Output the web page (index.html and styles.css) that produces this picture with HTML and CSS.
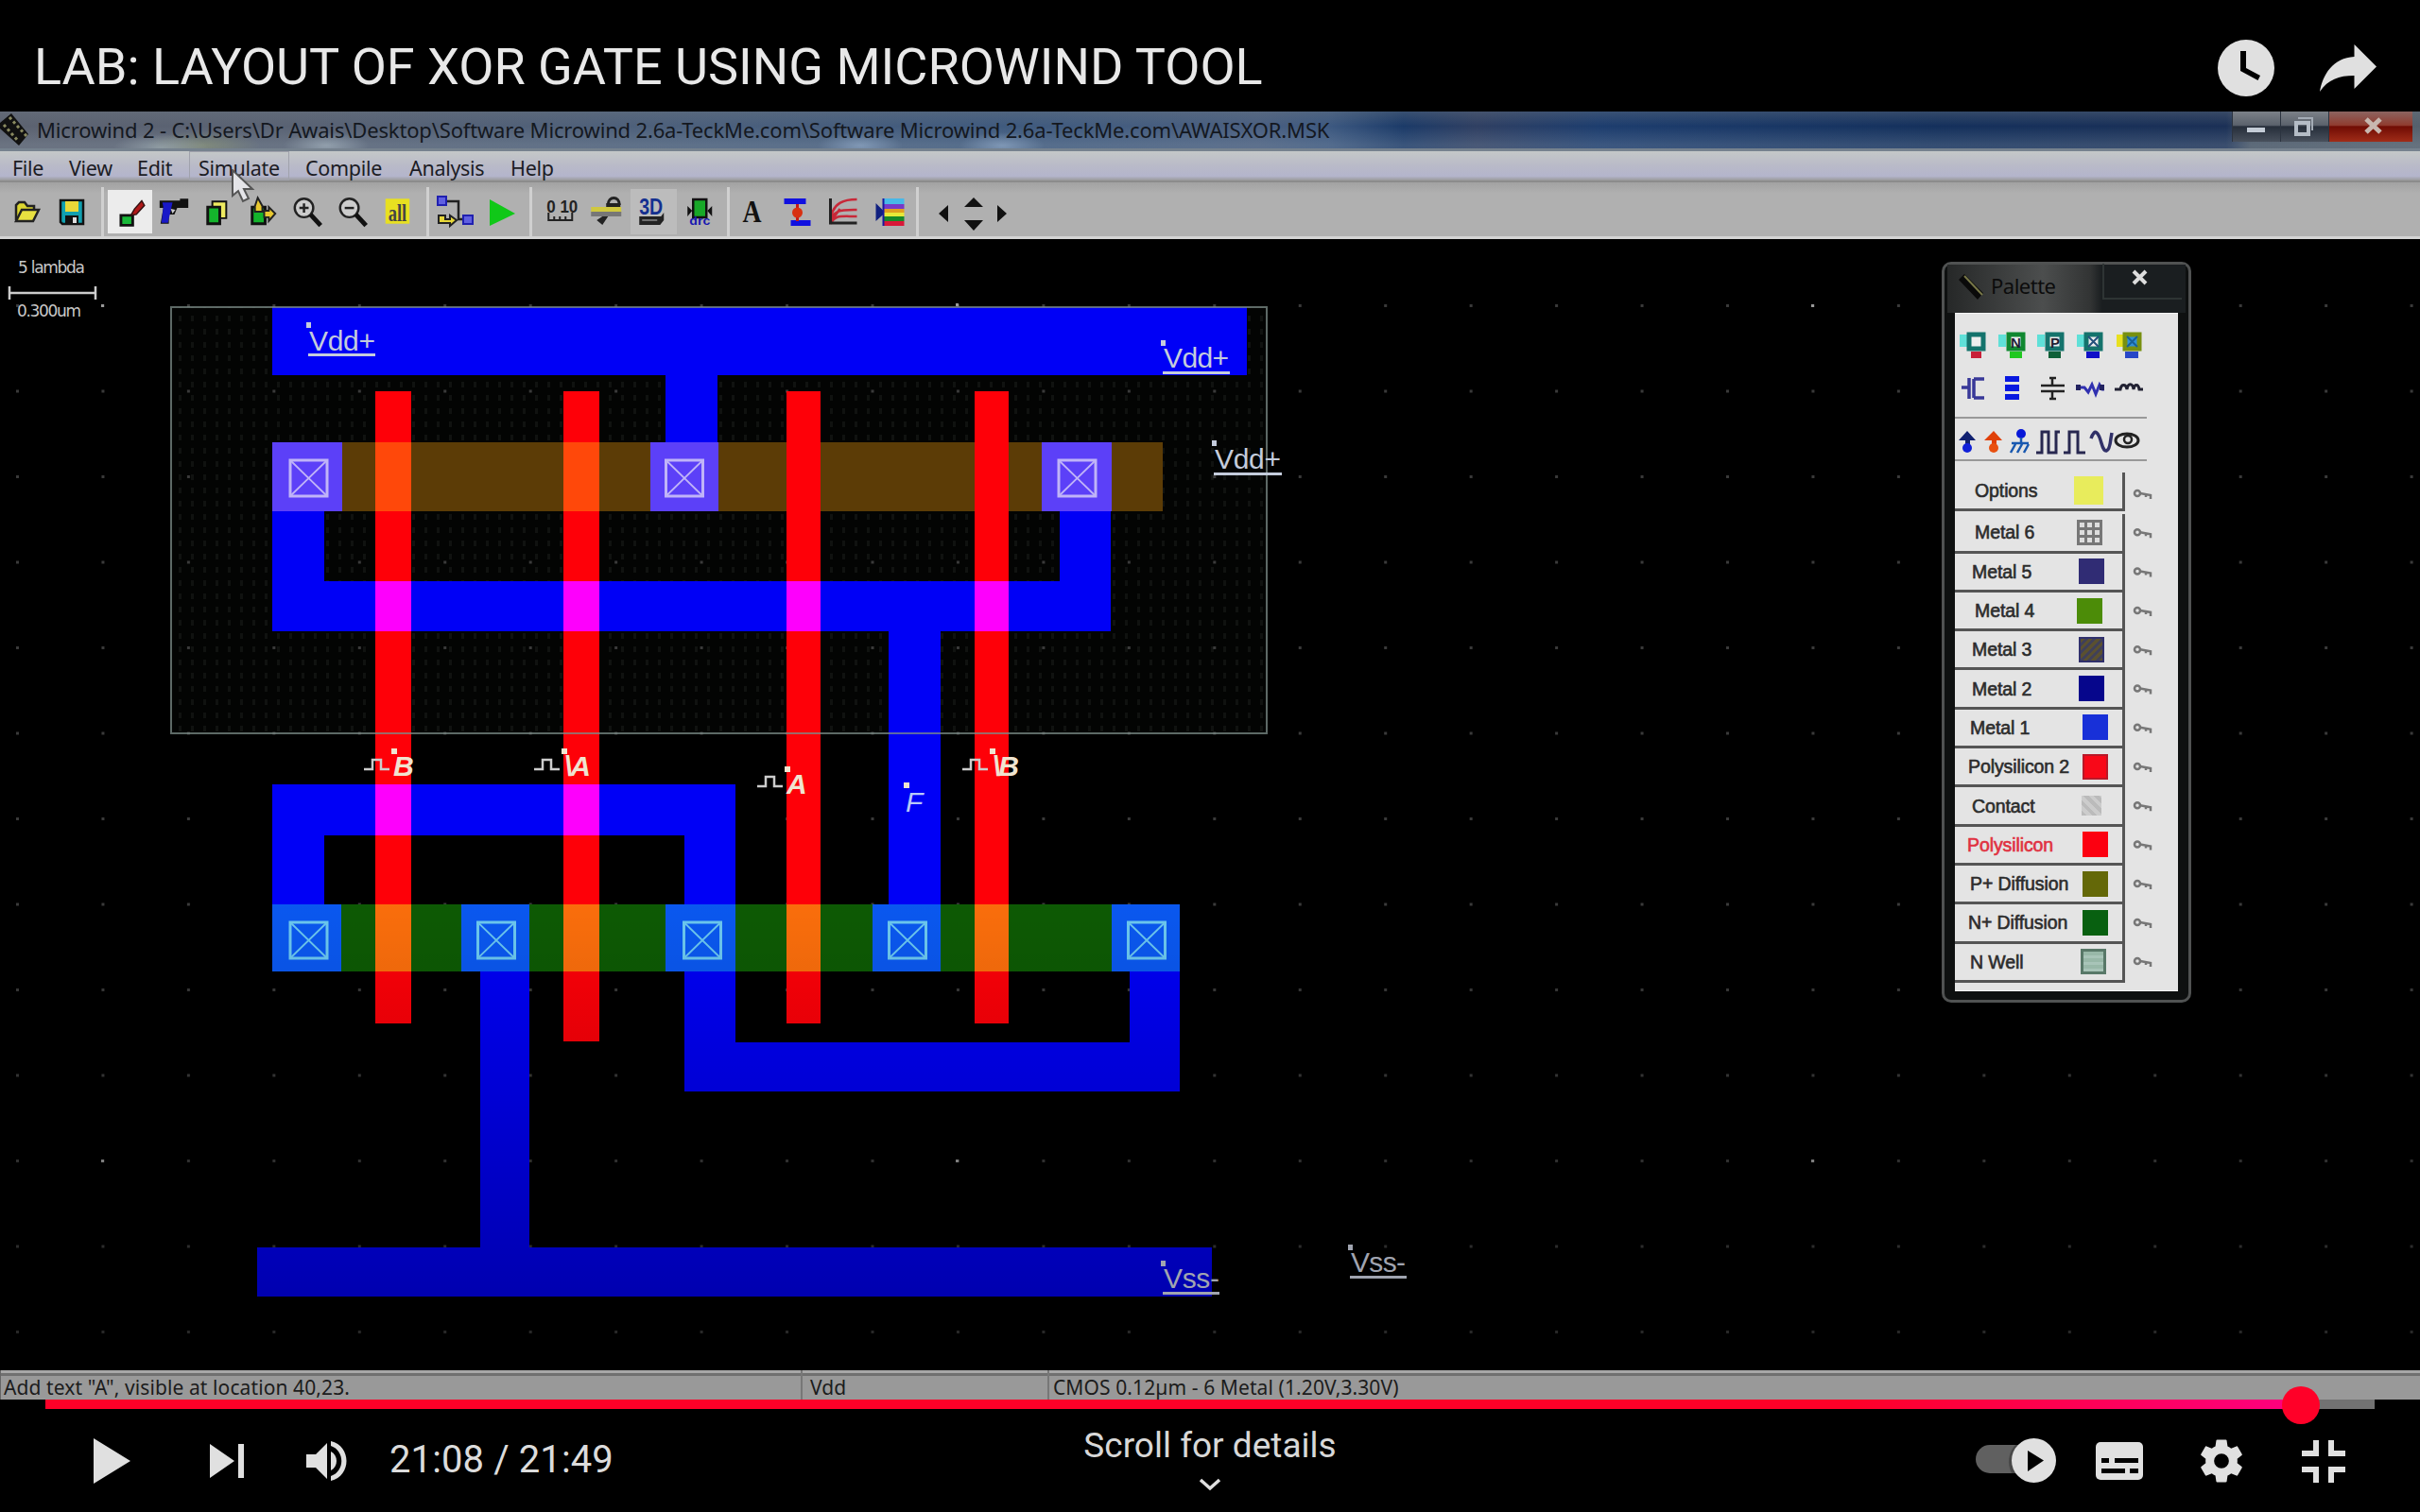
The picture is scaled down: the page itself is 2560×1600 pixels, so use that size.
FILE: index.html
```html
<!DOCTYPE html>
<html lang="en">
<head>
<meta charset="utf-8">
<title>LAB: LAYOUT OF XOR GATE USING MICROWIND TOOL</title>
<link rel="stylesheet" href="styles.css">
</head>
<body>
<div class="player">
  <header class="top">
    <h1 class="video-title">LAB: LAYOUT OF XOR GATE USING MICROWIND TOOL</h1>
    <svg class="ic" width="60" height="60" viewBox="0 0 60 60"><circle cx="30" cy="30" r="30"/><path d="M24 12h6v18l15 8-2.500 5L24 33z" fill="#000"/></svg>
    <svg class="ic share" width="60" height="50" viewBox="0 0 60 50"><path d="M36.500 0L60 23.500 36.500 47V33C20 33 9 37 0 50 3 32 14 14 36.500 13z"/></svg>
  </header>

  <div class="titlebar">
    <svg class="chip" width="32" height="40" viewBox="0 0 32 40"><path d="M0 12L12 2l18 22-10 12L0 18z" fill="#111"/><path d="M4 14l16 18M10 6l18 20" stroke="#8a8a60" stroke-width="3" stroke-dasharray="3 3"/></svg>
    <span class="wtitle">Microwind 2 - C:\Users\Dr Awais\Desktop\Software Microwind 2.6a-TeckMe.com\Software Microwind 2.6a-TeckMe.com\AWAISXOR.MSK</span>
    <div class="wbtns">
      <span class="wb min"><svg width="50" height="32" viewBox="0 0 50 32"><path d="M15 17h19v5H15z" fill="#c4ccd6"/></svg></span>
      <span class="wb max"><svg width="50" height="32" viewBox="0 0 50 32"><path d="M16 12h13v12H16z" fill="none" stroke="#b4bcc6" stroke-width="4"/><path d="M18 7h15v13" fill="none" stroke="#a4acb6" stroke-width="2"/></svg></span>
      <span class="wb close"><svg width="88" height="32" viewBox="0 0 88 32"><path d="M39 8l15 14M54 8L39 22" stroke="#c8b8b0" stroke-width="5"/></svg></span>
    </div>
  </div>

  <nav class="menubar">
    <span class="m mi1">File</span><span class="m mi2">View</span><span class="m mi3">Edit</span><span class="m mi4">Simulate</span><span class="m mi5">Compile</span><span class="m mi6">Analysis</span><span class="m mi7">Help</span>
  </nav>
  <svg class="cursor" width="26" height="36" viewBox="0 0 26 36"><path d="M1 1v27l6-5 5 11 6-3-5-10h9z" fill="#e4e4e8" stroke="#555" stroke-width="2"/></svg>

  <div class="toolbar">
    <div class="grp g1">
      <svg viewBox="0 0 48 48"><path d="M13 33V17l3-3h6l3 4h7v5" fill="#dcd630" stroke="#222" stroke-width="2.500"/><path d="M13 34l6-12h18l-6 12z" fill="#e8e040" stroke="#222" stroke-width="2.500"/></svg>
      <svg viewBox="0 0 48 48"><path d="M12 12h24v25H14l-2-2z" fill="#10a0b0" stroke="#111" stroke-width="2.500"/><path d="M17 13h14v11H17z" fill="#e8d838"/><path d="M17 28h14v9H17z" fill="#111"/><path d="M25 30h4v6h-4z" fill="#ddd"/></svg>
    </div>
    <div class="grp g2">
      <svg class="on" viewBox="0 0 48 48"><path d="M14 28h13v11H14z" fill="#18b838" stroke="#111" stroke-width="3"/><path d="M25 28l4-7L37 12l3 5-9 10z" fill="#b01818" stroke="#311" stroke-width="1.500"/></svg>
      <svg viewBox="0 0 48 48"><path d="M8 12h22v-2h9v10H27l-3 7h-6v10H9l3-17H8z" fill="#111"/><path d="M11 14h11l-5 22h-7l2-17z" fill="#1818c8"/><path d="M20 21l5 1-3 4z" fill="#ccc"/></svg>
      <svg viewBox="0 0 48 48"><path d="M17 13h15v18H17z" fill="#eeea60" stroke="#111" stroke-width="2"/><path d="M12 19h13v18H12z" fill="#14b42c" stroke="#111" stroke-width="3"/></svg>
      <svg viewBox="0 0 48 48"><path d="M12 19h14v18H12z" fill="#14b42c" stroke="#111" stroke-width="3"/><path d="M18 9l5 9v6h-8v-6zM25 23h5v-4l7 7-7 8v-4h-5z" fill="#e8c830" stroke="#222" stroke-width="2"/></svg>
      <svg viewBox="0 0 48 48"><circle cx="20" cy="20" r="10" fill="#ccc" stroke="#222" stroke-width="2.500"/><path d="M15 20h10M20 15v10" stroke="#222" stroke-width="2.500"/><path d="M27 27l11 12" stroke="#111" stroke-width="5"/></svg>
      <svg viewBox="0 0 48 48"><circle cx="21" cy="20" r="10" fill="#ccc" stroke="#222" stroke-width="2.500"/><path d="M16 20h10" stroke="#222" stroke-width="2.500"/><path d="M28 27l11 12" stroke="#111" stroke-width="5"/></svg>
      <svg viewBox="0 0 48 48"><path d="M12 10h26v27H12z" fill="#e8e020"/><text x="15" y="34" class="all" textLength="20" lengthAdjust="spacingAndGlyphs">all</text></svg>
    </div>
    <div class="grp g3">
      <svg viewBox="0 0 48 48"><path d="M14 13h13v19h13" fill="none" stroke="#222" stroke-width="2.500"/><path d="M5 8h9v9H5zM32 28h10v9H32z" fill="#6060e0" stroke="#2020b0" stroke-width="2"/><path d="M6 28h7v4h5v-4l7 5-7 6v-3H6z" fill="#e8d838" stroke="#222" stroke-width="2"/></svg>
      <svg viewBox="0 0 48 48"><path d="M12 11l27 15-27 13z" fill="#10c818"/></svg>
    </div>
    <div class="grp g4">
      <svg viewBox="0 0 48 48"><text x="8" y="25" class="num" textLength="33" lengthAdjust="spacingAndGlyphs">0 10</text><path d="M10 25v8h25v-8M16 29v4M22 29v4M28 29v4" fill="none" stroke="#222" stroke-width="2"/></svg>
      <svg viewBox="0 0 48 48"><path d="M24 17c0-10 12-10 12 0" fill="none" stroke="#222" stroke-width="3"/><path d="M22 15h15v5H22z" fill="#222"/><path d="M6 19h32v6H6z" fill="#d0c840"/><path d="M6 24h32v5H6z" fill="#777"/><path d="M24 29l-6 9-6-5 6-4z" fill="#222"/></svg>
      <svg class="lit" viewBox="0 0 48 48"><text x="9" y="27" class="d3" textLength="25" lengthAdjust="spacingAndGlyphs">3D</text><path d="M9 29h23l3-4v8l-4 5H9z" fill="#222"/><path d="M12 33h16" stroke="#888" stroke-width="1.500"/></svg>
      <svg viewBox="0 0 48 48"><path d="M17 11h14v19H17z" fill="#18a828" stroke="#111" stroke-width="2.500"/><path d="M11 18l5 5-5 6zM37 18l-5 5 5 6z" fill="#111"/><text x="13" y="38" class="drc" textLength="22" lengthAdjust="spacingAndGlyphs">drc</text></svg>
    </div>
    <div class="grp g5">
      <svg viewBox="0 0 48 48"><text x="13" y="35" class="bigA" textLength="20" lengthAdjust="spacingAndGlyphs">A</text></svg>
      <svg viewBox="0 0 48 48"><path d="M8 10h23v6H8zM15 33h21v6H15z" fill="#1010e0"/><path d="M22 16v18" stroke="#c81818" stroke-width="3"/><circle cx="22" cy="25" r="5.500" fill="#d83010"/></svg>
      <svg viewBox="0 0 48 48"><path d="M8 37c5-10 10-8 28-8M8 37c2-16 12-15 28-15M8 37c0-25 18-26 28-26M8 35l10-14" fill="none" stroke="#c82838" stroke-width="2.500"/><path d="M8 10v26h28" fill="none" stroke="#222" stroke-width="3"/></svg>
      <svg viewBox="0 0 48 48"><path d="M7 15l10 10-10 9z" fill="#102080"/><path d="M15 10h22v6H15z" fill="#48b8e8"/><path d="M15 16h22v5H15z" fill="#7838c8"/><path d="M15 21h22v4H15z" fill="#e0a020"/><path d="M15 25h22v4H15z" fill="#e8e838"/><path d="M15 29h22v5H15z" fill="#188828"/><path d="M15 34h22v5H15z" fill="#d81838"/><path d="M15 10v29" stroke="#1818a0" stroke-width="2"/></svg>
    </div>
    <svg class="nav" width="92" height="48" viewBox="0 0 92 48"><path d="M9 26l10-9v18zM81 26l-10-9v18zM36 19l10-10 10 10zM36 33l10 11 10-11z" fill="#111"/></svg>
  </div>

  <main class="canvas">
    <svg class="chipart" width="2560" height="1197" viewBox="0 253 2560 1197">
      <defs>
        <pattern id="grid" x="17" y="322" width="90.450" height="90.500" patternUnits="userSpaceOnUse"><rect width="3" height="3" fill="#3a3a3a"/></pattern>
        <pattern id="well" x="184" y="330" width="13" height="14" patternUnits="userSpaceOnUse"><rect width="13" height="14" fill="#030403"/><rect x="5" y="4" width="3" height="6" fill="#101210"/></pattern>
        <linearGradient id="shade" x1="0" y1="0" x2="0" y2="1"><stop offset="0" stop-opacity="0"/><stop offset=".4" stop-opacity=".13"/><stop offset="1" stop-opacity=".34"/></linearGradient>
        <g id="ct" fill="none"><path d="M0 0h39v38H0z" stroke-width="3"/><path d="M0 0l39 38M39 0L0 38" stroke-width="1.800"/></g>
        <path id="pulse" d="M0 0h9v-10h9v10h9" fill="none" stroke="#ccc" stroke-width="2.500"/>
      </defs>
      <rect x="181" y="325" width="1158" height="451" fill="url(#well)"/>
      <rect x="0" y="300" width="2560" height="1140" fill="url(#grid)"/>
      <g fill="#999"><path d="M107 322h3v3h-3zM1011 321h3v3h-3zM1916 322h3v3h-3zM107 1227h3v3h-3zM1011 1227h3v3h-3zM1916 1227h3v3h-3z"/></g>
      <g fill="#0000f6">
        <path d="M288 325h1031v72H759v71h-55v-71H288z"/>
        <path d="M288 541h55v74h778v-74h54v127H995v289h-55V668H288z"/>
        <path d="M288 957V830h490v127h-54v-73H343v73z"/>
        <path d="M508 1028h52v292h722v52H272v-52h236z"/>
        <path d="M724 1028h54v75h417v-75h53v127H724z"/>
      </g>
      <path d="M288 468h942v73H288z" fill="#5c3c06"/>
      <path d="M288 957h960v71H288z" fill="#0d5a04"/>
      <path d="M288 468h74v73h-74zM688 468h72v73h-72zM1102 468h74v73h-74z" fill="#5c40f8"/>
      <path d="M288 957h73v71h-73zM488 957h72v71h-72zM704 957h74v71h-74zM923 957h72v71h-72zM1176 957h72v71h-72z" fill="#0a58f0"/>
      <path d="M397 414h38v669h-38zM596 414h38v688h-38zM832 414h36v669h-36zM1031 414h36v669h-36z" fill="#fe0008"/>
      <path d="M397 615h38v53h-38zM596 615h38v53h-38zM832 615h36v53h-36zM1031 615h36v53h-36zM397 830h38v54h-38zM596 830h38v54h-38z" fill="#fd00fc"/>
      <path d="M397 468h38v73h-38zM596 468h38v73h-38z" fill="#ff480a"/>
      <path d="M397 957h38v71h-38zM596 957h38v71h-38zM832 957h36v71h-36zM1031 957h36v71h-36z" fill="#fb6e0c"/>
      <g stroke="#c0b4f8"><use href="#ct" x="307" y="487"/><use href="#ct" x="704.500" y="487"/><use href="#ct" x="1120" y="487"/></g>
      <g stroke="#6cc8f0"><use href="#ct" x="307" y="976"/><use href="#ct" x="505.500" y="976"/><use href="#ct" x="723.500" y="976"/><use href="#ct" x="940.500" y="976"/><use href="#ct" x="1193.500" y="976"/></g>
      <path d="M181 325h1159v451H181z" fill="none" stroke="#7c8c88" stroke-opacity=".75" stroke-width="2"/>
      <rect x="0" y="950" width="2560" height="500" fill="url(#shade)"/>

      <g class="net">
        <text x="327" y="371" textLength="70">Vdd+</text><text x="1231" y="389" textLength="69">Vdd+</text><text x="1285" y="496" textLength="70">Vdd+</text>
        <path d="M326 374h71v3h-71zM1230 393h71v3h-71zM1284 500h72v3h-72z"/>
        <path d="M324 341h5v6h-5zM1228 360h5v6h-5zM1282 466h5v6h-5z"/>
      </g>
      <g class="net vss">
        <text x="1231" y="1363" textLength="59">Vss-</text><text x="1429" y="1346" textLength="58">Vss-</text>
        <path d="M1230 1367h60v3h-60zM1428 1350h60v3h-60zM1228 1334h5v6h-5zM1426 1317h5v6h-5z"/>
      </g>
      <use href="#pulse" x="385" y="814"/><use href="#pulse" x="565" y="814"/><use href="#pulse" x="801" y="832"/><use href="#pulse" x="1018" y="814"/>
      <g class="sig">
        <text x="416" y="821">B</text><text x="597" y="821" textLength="28">\A</text><text x="832" y="840">A</text><text x="1050" y="821" textLength="28">\B</text><text x="958" y="859" class="thin">F</text>
        <path d="M414 792h6v6h-6zM594 792h6v6h-6zM830 811h6v6h-6zM956 828h6v6h-6zM1047 792h6v6h-6z"/>
      </g>
      <g class="scale">
        <text x="19" y="289" textLength="71">5 lambda</text><text x="18" y="335" textLength="68">0.300um</text>
        <path d="M10 303v14M101 303v14M10 310h91" stroke="#ccc" stroke-width="2.500"/>
      </g>
    </svg>

    <aside class="palette">
      <div class="phead">
        <svg width="30" height="32" viewBox="0 0 30 32"><path d="M2 8l6-6 20 20-6 7z" fill="#0a0a0a"/><path d="M8 4l19 20" stroke="#777748" stroke-width="2"/></svg>
        <span class="pname">Palette</span>
        <span class="px"><svg width="18" height="18" viewBox="0 0 18 18"><path d="M2 2l13 13M15 2L2 15" stroke="#ddd" stroke-width="4"/></svg></span>
      </div>
      <div class="pbody">
        <svg width="236" height="165" viewBox="2069 331 236 165">
          <g stroke-width="5" fill="#eee">
            <path d="M2074 353h8v13h-8zM2115 353h8v13h-8zM2156 353h8v13h-8zM2198 353h8v13h-8z" fill="#60e0d8"/><path d="M2240 353h8v13h-8z" fill="#e8e020"/>
            <path d="M2084 353h15v15h-15zM2167 353h15v15h-15zM2208 353h15v15h-15z" stroke="#14736c"/><path d="M2126 353h15v15h-15z" stroke="#108830"/><path d="M2249 353h15v15h-15z" stroke="#789010" fill="#3090d8"/>
          </g>
          <path d="M2086 371h11v7h-11z" fill="#c82038"/><path d="M2127 371h13v7h-13z" fill="#20c820"/><path d="M2168 371h13v7h-13z" fill="#106038"/><path d="M2208 371h14v7h-14z" fill="#1010c8"/><path d="M2249 371h14v7h-14z" fill="#2848c8"/>
          <text x="2128" y="367" class="pl">N</text><text x="2170" y="367" class="pl">P</text>
          <path d="M2210 355l11 11M2221 355l-11 11" stroke="#24507c" stroke-width="2"/><path d="M2251 355l11 11M2262 355l-11 11" stroke="#186098" stroke-width="2"/>
          <path d="M2084 399v22M2076 409h8M2089 400v20M2100 400h-11M2100 420h-11" stroke="#383898" stroke-width="3.500" fill="none"/>
          <path d="M2122 397h15v6h-15zM2122 406h15v7h-15zM2122 416h15v6h-15z" fill="#0818e0"/>
          <path d="M2160 407h25M2160 413h25M2172 398v9M2172 413v9M2169 399h7M2169 421h7" stroke="#222" stroke-width="2.500"/>
          <path d="M2197 409h9l4 5 4-8 4 10 4-10 3 5h2" stroke="#3030b0" stroke-width="3" fill="none"/><path d="M2197 406h5v6h-5zM2222 406h5v6h-5z" fill="#222260"/>
          <path d="M2238 411h6c1-6 6-6 7 0 1-7 6-7 7 0 1-6 5-6 6 0h4" stroke="#223" stroke-width="3" fill="none"/>
          <path d="M2068 441h204M2068 486h204" stroke="#999" stroke-width="2"/>
          <path d="M2082 455l9 10h-6v8h-5v-8h-7z" fill="#102070"/><circle cx="2082" cy="473" r="5" fill="#1020d8"/>
          <path d="M2110 455l9 10h-6v8h-5v-8h-8z" fill="#e04008"/><circle cx="2110" cy="473" r="5" fill="#e85010"/>
          <circle cx="2139" cy="458" r="5" fill="#0818d8"/><path d="M2139 462v6M2129 468h18M2133 469l-5 9M2140 469l-5 9M2147 469l-5 9" stroke="#1858b0" stroke-width="2.500"/>
          <path d="M2155 478h6v-22h7v22h8v-22h4M2184 478h6v-22h9v22h8" stroke="#282850" stroke-width="3" fill="none"/>
          <path d="M2213 463c4-12 8-6 11 5s8 12 10-5l1-6" stroke="#303068" stroke-width="3.500" fill="none"/>
          <ellipse cx="2251" cy="465" rx="12" ry="7" fill="none" stroke="#222" stroke-width="3"/><circle cx="2252" cy="464" r="4" fill="none" stroke="#222" stroke-width="2.500"/>
        </svg>
        <div class="layers">
          <div class="row first"><b class="nm i22">Options</b><i class="sw yellow"></i></div>
          <div class="row"><b class="nm i22">Metal 6</b><i class="sw mesh"></i></div>
          <div class="row"><b class="nm i18">Metal 5</b><i class="sw metal5"></i></div>
          <div class="row"><b class="nm i22">Metal 4</b><i class="sw metal4"></i></div>
          <div class="row"><b class="nm i18">Metal 3</b><i class="sw metal3"></i></div>
          <div class="row"><b class="nm i18">Metal 2</b><i class="sw metal2"></i></div>
          <div class="row"><b class="nm i16">Metal 1</b><i class="sw metal1"></i></div>
          <div class="row"><b class="nm i15">Polysilicon 2</b><i class="sw p2"></i></div>
          <div class="row"><b class="nm i18">Contact</b><i class="sw con"></i></div>
          <div class="row"><b class="nm i14 red">Polysilicon</b><i class="sw p1"></i></div>
          <div class="row"><b class="nm i16">P+ Diffusion</b><i class="sw pd"></i></div>
          <div class="row"><b class="nm i15">N+ Diffusion</b><i class="sw nd"></i></div>
          <div class="row"><b class="nm i16">N Well</b><i class="sw nw"></i></div>
        </div>
        <svg class="keys" width="24" height="545" viewBox="0 0 24 545">
          <defs><g id="key" fill="none" stroke="#777" stroke-width="2.500"><circle cx="5" cy="4" r="3"/><path d="M8 4l11 2v4M14 5v3"/></g></defs>
          <use href="#key" y="18"/><use href="#key" y="59.300"/><use href="#key" y="100.600"/><use href="#key" y="141.900"/><use href="#key" y="183.200"/><use href="#key" y="224.500"/><use href="#key" y="265.800"/><use href="#key" y="307"/><use href="#key" y="348.300"/><use href="#key" y="389.600"/><use href="#key" y="431"/><use href="#key" y="472"/><use href="#key" y="513"/>
        </svg>
      </div>
    </aside>
  </main>

  <div class="status"><span class="s1">Add text "A", visible at location 40,23.</span><span class="s2">Vdd</span><span class="s3">CMOS 0.12µm - 6 Metal (1.20V,3.30V)</span></div>

  <div class="bar"><div class="played"></div><div class="knob"></div></div>
  <footer class="controls">
    <div class="left">
      <svg class="ic" width="39" height="48" viewBox="0 0 39 48"><path d="M0 0l39 24L0 48z"/></svg>
      <svg class="ic nxt" width="36" height="36" viewBox="0 0 36 36"><path d="M0 0l26 18L0 36zM30 0h6v36h-6z"/></svg>
      <svg class="ic vol" width="43" height="42" viewBox="0 0 43 42"><path d="M0 14h10L22 2v38L10 28H0zM26 11c8 4 8 16 0 20z"/><path d="M26 0c22 5 22 37 0 42v-5c15-5 15-27 0-32z"/></svg>
      <span class="time">21:08 / 21:49</span>
    </div>
    <div class="mid"><span>Scroll for details</span><svg width="24" height="14" viewBox="0 0 24 14"><path d="M2 2l10 9 10-9" fill="none" stroke="#e0e0e0" stroke-width="3.500"/></svg></div>
    <div class="right">
      <svg width="86" height="48" viewBox="0 0 86 48"><rect x="0" y="7" width="66" height="30" rx="15" fill="#606060"/><path d="M42 7a26 26 0 0 0-4 30h10V7z" fill="#484848"/><circle cx="61.500" cy="23.500" r="23.500" fill="#e0e0e0"/><path d="M55 13l17 10.500L55 35z"/></svg>
      <svg class="cc" width="50" height="40" viewBox="0 0 50 40"><rect width="50" height="40" rx="5" fill="#e0e0e0"/><path d="M6 17h8v5H6zM20 17h25v5H20zM6 28h25v5H6zM36 28h9v5h-9z"/></svg>
      <svg class="ic gear" width="44" height="46" viewBox="2.200 2 19.600 20"><path d="M19.430 12.980c.04-.32.07-.64.07-.98s-.03-.66-.07-.98l2.110-1.650c.19-.15.24-.42.12-.64l-2-3.460c-.12-.22-.39-.3-.61-.22l-2.490 1c-.52-.4-1.080-.73-1.690-.98l-.38-2.650A.49.49 0 0 0 14 2h-4c-.25 0-.46.18-.49.42l-.38 2.650c-.61.25-1.170.59-1.690.98l-2.490-1c-.23-.09-.49 0-.61.22l-2 3.460c-.13.22-.07.49.12.64l2.110 1.650c-.04.32-.07.65-.07.98s.03.66.07.98l-2.110 1.650c-.19.15-.24.42-.12.64l2 3.460c.12.22.39.3.61.22l2.490-1c.52.4 1.080.73 1.690.98l.38 2.650c.03.24.24.42.49.42h4c.25 0 .46-.18.49-.42l.38-2.650c.61-.25 1.170-.59 1.690-.98l2.490 1c.23.09.49 0 .61-.22l2-3.460c.12-.22.07-.49-.12-.64zM12 15.500A3.500 3.500 0 1 1 12 8.500a3.500 3.500 0 0 1 0 7z"/></svg>
      <svg class="ic exit" width="46" height="45" viewBox="0 0 46 45"><path d="M12 0h6v17H0v-6h12zM28 0h6v11h12v6H28zM0 28h18v17h-6V34H0zM28 28h18v6H34v11h-6z"/></svg>
    </div>
  </footer>
</div>
</body>
</html>
```

FILE: styles.css
```css
* { box-sizing: border-box; }
body { margin: 0; background: #000; }
svg { display: block; flex: none; }
.player { position: relative; width: 2560px; height: 1600px; background: #000; overflow: hidden; display: flex; flex-direction: column; }
.ic { fill: #e0e0e0; }

.top { height: 118px; flex: none; display: flex; align-items: flex-start; padding: 42px 46px 0 36px; }
.video-title { margin: -3px auto 0 0; font: 400 54px/64px Roboto, sans-serif; color: #e8e8e8; white-space: nowrap; }
.share { margin: 5px 0 0 48px; }

.titlebar { height: 42px; flex: none; display: flex; align-items: flex-start; border-bottom: 3px solid #76828e;
  background: radial-gradient(ellipse 50px 14px at 170px 38px, rgba(170,185,190,.55), transparent),
    radial-gradient(ellipse 60px 16px at 215px 36px, rgba(170,180,110,.35), transparent),
    radial-gradient(ellipse 45px 14px at 345px 36px, rgba(180,195,205,.55), transparent),
    radial-gradient(ellipse 45px 14px at 910px 36px, rgba(160,185,215,.55), transparent),
    radial-gradient(ellipse 45px 14px at 1060px 36px, rgba(160,185,215,.55), transparent),
    linear-gradient(rgba(110,120,130,.35), transparent 40%, rgba(150,165,180,.25) 90%),
    linear-gradient(90deg, #5c6270 0, #596273 12%, #4a5f7c 30%, #3f5a7e 42%, #4a5f80 52%, #3c5880 55%, #1b3a68 58%, #2f3f62 61%, #1d3d6e 66%, #14305c 80%, #1b3056 92%, #4a5766 93%, #55606c 100%); }
.wtitle { margin-left: 7px; font: 400 22px/39px "Noto Sans", sans-serif; letter-spacing: -.16px; color: #14181f; white-space: nowrap; }
.wbtns { margin-left: auto; margin-right: 8px; display: flex; }
.wb { height: 32px; border-left: 1px solid #2c3440; background: linear-gradient(#7c8188, #5b626c 45%, #262e3a 50%, #48505c); }
.wb.close { background: linear-gradient(#8c6460, #903c30 45%, #700c04 50%, #a02c18); }

.menubar { height: 33px; flex: none; display: flex; background: linear-gradient(#c4c8c8, #b9bac8 50%, #b4b5cc 85%, #999); border-bottom: 2px solid #8c8c8c; }
.m { font: 400 21.500px/35px "Noto Sans", sans-serif; color: #1c1c24; letter-spacing: -.3px; }
.mi1 { width: 73px; padding-left: 13px; }
.mi2 { width: 72px; }
.mi3 { width: 55px; }
.mi4 { width: 106px; padding-left: 9px; border: 1px solid #a0a2ac; line-height: 33px; }
.mi5 { width: 127px; padding-left: 17px; }
.mi6 { width: 107px; }
.cursor { position: absolute; left: 245px; top: 179px; }

.toolbar { height: 60px; flex: none; display: flex; align-items: center; background: linear-gradient(#a2a2a2, #b0b0b0 20%, #b0b0b0); border-bottom: 3px solid #d4d4d4; padding: 4px 0 0 4px; }
.grp { display: flex; align-items: center; height: 52px; border-right: 3px solid #d0d0d0; }
.grp svg { height: 48px; }
.g1 { width: 106px; }
.g1 svg { width: 48px; }
.g2 { width: 344px; padding-left: 4px; }
.g2 svg { width: 47px; }
.grp .on { background: #ececec; height: 46px; }
.g3 { width: 109px; padding-left: 4px; }
.g3 svg { width: 48px; }
.g4 { width: 209px; padding-left: 7px; }
.g4 svg { width: 48.500px; }
.lit { background: #bcbcbc; }
.g5 { width: 200px; }
.g5 svg { width: 49px; }
.nav { margin-left: 12px; }
.all { font: 700 26px "Liberation Serif", serif; fill: #444; }
.num { font: 700 18px "Liberation Sans", sans-serif; fill: #222; }
.d3 { font: 700 24px "Liberation Sans", sans-serif; fill: #143090; }
.drc { font: 700 13px "Liberation Sans", sans-serif; fill: #1818b0; }
.bigA { font: 700 33px "Liberation Serif", serif; fill: #111; }
.pl { font: 700 15px "Liberation Sans", sans-serif; fill: #223; }

.canvas { position: relative; height: 1197px; flex: none; }
.net { font: 400 30px "Liberation Sans", sans-serif; fill: #c4ccdc; }
.vss { fill: #a0a4b0; }
.sig { font: italic 700 30px "Liberation Sans", sans-serif; fill: #f0e4d0; }
.thin { font-weight: 400; fill: #b8c8f8; }
.scale { font: 400 17px "DejaVu Sans", sans-serif; fill: #c8c8c8; }

.palette { position: absolute; left: 2054px; top: 24px; width: 264px; height: 784px; border: 3px solid #505252; border-radius: 10px; background: #0e1010; padding: 0 11px; }
.phead { height: 51px; display: flex; align-items: flex-start; background: linear-gradient(90deg, #262828, #4c4e4e 40%, #323434 60%, #1a1e20 65%, #1a1e20); margin: 0 -8px; padding: 8px 0 0 10px; }
.pname { margin-left: 6px; font: 400 22px/28px "Noto Sans", sans-serif; color: #0c0c0c; letter-spacing: -.5px; }
.px { margin: -9px 4px 0 auto; width: 84px; height: 38px; padding: 6px 0 0 29px; border: solid #2e3434; border-width: 0 0 2px 2px; }
.pbody { height: 718px; background: #e4e4e4; border: solid #f4f4f4; border-width: 1px 0 1px; display: grid; grid-template: 168px 1fr / 180px 1fr; }
.pbody > svg:first-child { grid-column: 1 / 3; }
.row { height: 41.300px; border-right: 3px solid #555; border-bottom: 3px solid #555; display: flex; align-items: center; }
.row.first { margin-bottom: 3px; }
.nm { font: 400 19.500px/24px "Liberation Sans", sans-serif; color: #2c2c2c; -webkit-text-stroke: .6px; letter-spacing: -.1px; white-space: nowrap; }
.i22 { padding-left: 21px; } .i18 { padding-left: 18px; } .i16 { padding-left: 16px; } .i15 { padding-left: 14px; } .i14 { padding-left: 13px; }
.red { color: #e03040; }
.sw { width: 27px; height: 27px; margin: 0 16px 0 auto; flex: none; }
.yellow { background: #e8ec5c; width: 31px; height: 30px; margin-right: 20px; }
.mesh { background: repeating-linear-gradient(#777 0 3px, transparent 3px 8px), repeating-linear-gradient(90deg, #777 0 3px, #ddd 3px 8px); margin-right: 21px; }
.metal5 { background: #302c74; margin-right: 19px; }
.metal4 { background: #4c8c08; margin-right: 21px; }
.metal3 { background: repeating-linear-gradient(135deg, #5a5030 0 3px, #404058 3px 6px); border: 2px solid #30306c; margin-right: 19px; }
.metal2 { background: #06068c; margin-right: 19px; }
.metal1 { background: #1830d8; margin-right: 15px; }
.p2 { background: #f80818; border: 2px solid #b81828; margin-right: 15px; }
.con { background: repeating-linear-gradient(45deg, #bbb 0 4px, #ccc 4px 8px); width: 21px; height: 21px; margin-right: 22px; }
.p1 { background: #fc0010; margin-right: 15px; }
.pd { background: #646808; margin-right: 15px; }
.nd { background: #086010; margin-right: 15px; }
.nw { background: repeating-linear-gradient(#98b8a8 0 4px, #a8c4b8 4px 7px); border: 3px solid #587868; margin-right: 17px; }
.keys { margin-left: 8px; }

.status { height: 31px; flex: none; display: flex; background: linear-gradient(#a8a8a8 0 3px, #707070 3px 6px, #999 6px); font: 400 21px/37px "Noto Sans", sans-serif; color: #1c1c1c; letter-spacing: .1px; white-space: nowrap; }
.s1 { width: 847px; padding-left: 3px; border-left: 1px solid #666; }
.s2 { width: 261px; padding-left: 8px; border-left: 2px solid #777; }
.s3 { padding-left: 4px; border-left: 2px solid #777; }

.bar { position: relative; height: 10px; flex: none; margin: 0 48px; background: #727272; }
.played { width: 2386px; height: 10px; background: linear-gradient(90deg, #ff0028 80%, #ff0080); }
.knob { position: absolute; left: 2366px; top: -14px; width: 40px; height: 40px; border-radius: 50%; background: #ff0028; }
.controls { flex: 1; display: grid; grid-template-columns: 1fr 300px 1fr; }
.left { display: flex; align-items: center; height: 110px; padding-left: 99px; }
.nxt { margin-left: 84px; }
.vol { margin-left: 66px; }
.time { margin: -2px 0 0 45px; font: 400 40px/48px Roboto, sans-serif; letter-spacing: .1px; color: #dcdcdc; }
.mid { display: flex; flex-direction: column; align-items: center; font: 400 37px/44px Roboto, sans-serif; color: #d8d8d8; padding-top: 17px; }
.mid svg { margin-top: 12px; }
.mid span { white-space: nowrap; }
.right { display: flex; align-items: center; justify-content: flex-end; height: 110px; padding-right: 79px; }
.cc { margin-left: 41px; }
.gear { margin-left: 61px; }
.exit { margin-left: 63px; }
```
